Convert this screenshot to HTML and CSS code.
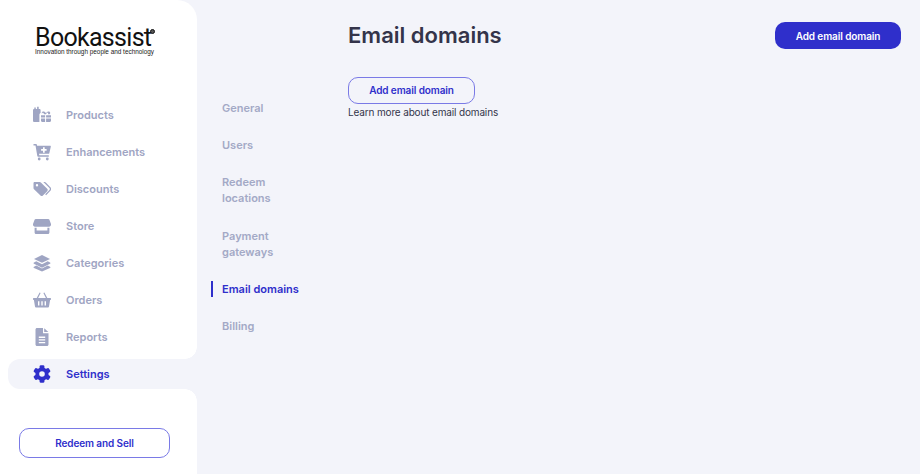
FILE: index.html
```html
<!DOCTYPE html>
<html lang="en">
<head>
    <meta charset="UTF-8">
    <meta name="viewport" content="width=device-width, initial-scale=1.0">
    <title>Email domains</title>
    <link rel="stylesheet" href="styles.css">
</head>
<body>

<div class="app">
    <!-- Main sidebar -->
    <aside class="sidebar">
        <div class="logo">
            <div class="logo-name">Bookassist<span class="logo-mark"></span></div>
            <div class="logo-tag">Innovation through people and technology</div>
        </div>

        <nav class="side-nav">
            <a class="side-item">
                <svg class="side-icon" viewBox="0 0 18 18"><path d="M0 4.300C0 3.500.6 3 1.300 3V1.500h1.500V3h1.300V.8h1.600V3h.6c.8 0 1.300.5 1.300 1.300v2.600c-.8.300-1.200 1-1.200 1.800v7.300H1.300C.6 16 0 15.500 0 14.700z"/><path d="M8 9.200h4.100v2.400H8zM13.100 9.200H18v2.400h-4.900zM8 12.500h4.100V16H9.200C8.500 16 8 15.500 8 14.800zM13.100 12.500H18v2.300c0 .7-.5 1.200-1.200 1.200h-3.700z"/><path d="M9.300 8.300c-.9-.8-.7-2.400.5-2.800 1.100-.4 2.300.3 3.200 1.600.9-1.300 2.100-2 3.200-1.600 1.200.4 1.400 2 .5 2.800h-1.900c.5-.4.500-1.300-.1-1.500-.6-.2-1.300.4-1.700 1.500h-1.800c-.4-1.100-1.100-1.700-1.700-1.500-.6.200-.6 1.100-.1 1.500z"/></svg>
                <span>Products</span>
            </a>
            <a class="side-item">
                <svg class="side-icon" viewBox="0 0 18 18"><path fill-rule="evenodd" d="M.5 1h2.600c.4 0 .7.3.8.7l.2 1h13c.5 0 .9.500.7 1l-1.500 6.500c-.1.400-.4.600-.8.600H6l.3 1.400h9.500v1.500H5.100c-.4 0-.7-.3-.8-.6L2.500 2.500h-2zM10 4.200v1.900H8.100v1.700H10v1.900h1.700V7.800h1.900V6.100h-1.900V4.200z"/><circle cx="6.200" cy="16" r="1.400"/><circle cx="14.300" cy="16" r="1.400"/></svg>
                <span>Enhancements</span>
            </a>
            <a class="side-item">
                <svg class="side-icon" viewBox="0 0 18 18"><path fill-rule="evenodd" d="M.5 3.200c0-.7.5-1.200 1.200-1.200h5c.5 0 .9.200 1.200.5l6.300 6.300c.7.700.7 1.700 0 2.400l-4.300 4.300c-.7.700-1.700.7-2.400 0L1 9.200C.7 8.900.5 8.500.5 8zM4 4a1.200 1.200 0 1 0 0 2.400A1.200 1.200 0 0 0 4 4z"/><path d="M10.300 2h1.300c.5 0 .9.200 1.200.5l4.800 4.900c1 1 1 2.200 0 3.200l-4.500 4.600-.9-.9 4.200-4.300c.6-.6.600-1.300 0-1.900z"/></svg>
                <span>Discounts</span>
            </a>
            <a class="side-item">
                <svg class="side-icon" viewBox="0 0 18 18"><path d="M2.800 2h12.400c.6 0 1 .3 1.200.8L18 7v.8c0 1.100-.9 1.900-1.900 1.900H1.900C.9 9.700 0 8.900 0 7.800V7l1.600-4.200C1.800 2.300 2.200 2 2.800 2z"/><path fill-rule="evenodd" d="M1.600 10.700h2v2.800h10.800v-2.800h2v4.800c0 .8-.6 1.500-1.400 1.500H3c-.8 0-1.400-.7-1.400-1.500z"/></svg>
                <span>Store</span>
            </a>
            <a class="side-item">
                <svg class="side-icon" viewBox="0 0 18 18"><path d="M9 1l8 3.900L9 8.800 1 4.900z"/><path d="M3.300 7.300L1 8.500c-.6.400-.6.900 0 1.200l8 4 8-4c.6-.3.600-.8 0-1.200l-2.300-1.200L9 10.200z"/><path d="M3.300 11.600L1 12.800c-.6.300-.6.900 0 1.200l8 3.500 8-3.500c.6-.3.600-.9 0-1.200l-2.300-1.200L9 14.600z"/></svg>
                <span>Categories</span>
            </a>
            <a class="side-item">
                <svg class="side-icon" viewBox="0 0 18 18"><path fill-rule="evenodd" d="M.6 6.900h3.100L6.600 1.500l1 .5-2.500 4.900h7.800L10.400 2l1-.5 2.900 5.400h3.100c.4 0 .6.300.6.600v.8c0 .3-.2.600-.6.600h-.3l-1.100 6.700c-.1.600-.6 1-1.200 1H3.200c-.6 0-1.100-.4-1.200-1L.9 8.900H.6C.2 8.900 0 8.600 0 8.300v-.8c0-.3.200-.6.600-.6zM5 10.200v4.300h1.400v-4.300zm3.300 0v4.300h1.400v-4.300zm3.300 0v4.300H13v-4.300z"/></svg>
                <span>Orders</span>
            </a>
            <a class="side-item">
                <svg class="side-icon" viewBox="0 0 18 18"><path fill-rule="evenodd" d="M4 0h6v5.200h5.500v11.300c0 .8-.7 1.500-1.500 1.500H4c-.8 0-1.500-.7-1.500-1.500v-15C2.500.7 3.200 0 4 0zm1.800 8.500v1.400h6.400V8.500zm0 2.700v1.400h6.400v-1.400zm0 2.700v1.400h6.400v-1.400z"/><path d="M11.200.2l4.200 3.900h-4.200z"/></svg>
                <span>Reports</span>
            </a>
            <a class="side-item active">
                <svg class="side-icon" viewBox="-9 -9 18 18">
                    <circle class="gear-ring" r="4.700"/>
                    <rect class="gear-tooth" x="-2.400" y="-8.800" width="4.800" height="4.500" rx="1.300"/>
                    <rect class="gear-tooth" x="-2.400" y="-8.800" width="4.800" height="4.500" rx="1.300" transform="rotate(60)"/>
                    <rect class="gear-tooth" x="-2.400" y="-8.800" width="4.800" height="4.500" rx="1.300" transform="rotate(120)"/>
                    <rect class="gear-tooth" x="-2.400" y="-8.800" width="4.800" height="4.500" rx="1.300" transform="rotate(180)"/>
                    <rect class="gear-tooth" x="-2.400" y="-8.800" width="4.800" height="4.500" rx="1.300" transform="rotate(240)"/>
                    <rect class="gear-tooth" x="-2.400" y="-8.800" width="4.800" height="4.500" rx="1.300" transform="rotate(300)"/>
                </svg>
                <span>Settings</span>
            </a>
        </nav>

        <button class="btn btn-outline redeem-btn">Redeem and Sell</button>
    </aside>

    <!-- Settings sub navigation -->
    <nav class="sub-nav">
        <a class="sub-item">General</a>
        <a class="sub-item">Users</a>
        <a class="sub-item">Redeem locations</a>
        <a class="sub-item">Payment gateways</a>
        <a class="sub-item active">Email domains</a>
        <a class="sub-item">Billing</a>
    </nav>

    <main class="content">
        <div class="content-head">
            <h1>Email domains</h1>
            <button class="btn btn-solid">Add email domain</button>
        </div>
        <div class="empty">
            <button class="btn btn-outline empty-btn">Add email domain</button>
            <p>Learn more about email domains</p>
        </div>
    </main>
</div>

</body>
</html>
```

FILE: styles.css
```css
body {
    margin: 0;
    padding: 0;
    font-family: 'Inter', sans-serif;
    color: #34344a;
    background-color: #f3f4fa;
}

.app {
    display: flex;
    height: 474px;
    overflow: hidden;
}

/* Sidebar */
.sidebar {
    width: 197px;
    flex-shrink: 0;
    display: flex;
    flex-direction: column;
    background: #fff;
    border-top-right-radius: 20px;
}

.logo {
    height: 100px;
    padding: 28px 0 0 35px;
    box-sizing: border-box;
}

.logo-name {
    font-family: 'Roboto', sans-serif;
    font-size: 25px;
    line-height: 20px;
    letter-spacing: -0.7px;
    color: #111;
    position: relative;
    width: 120px;
}

.logo-mark {
    position: absolute;
    top: 1px;
    left: 115px;
    width: 3px;
    height: 3px;
    border: 1px solid #111;
    border-radius: 50%;
    background: #555;
}

.logo-tag {
    font-family: 'Liberation Sans', sans-serif;
    font-size: 6.4px;
    line-height: 7px;
    color: #222;
    white-space: nowrap;
}

.side-nav {
    display: flex;
    flex-direction: column;
    gap: 7px;
}

.side-item {
    position: relative;
    display: flex;
    align-items: center;
    gap: 15px;
    height: 30px;
    margin-left: 8px;
    padding-left: 25px;
    font-size: 11px;
    font-weight: 600;
    color: #9fa5c3;
}

.side-icon {
    width: 18px;
    height: 18px;
    fill: currentColor;
    flex-shrink: 0;
}

.gear-ring {
    fill: none;
    stroke: currentColor;
    stroke-width: 3.800;
}

.side-item.active {
    color: #2f2fcb;
    background: #f3f4fa;
    border-radius: 12px 0 0 12px;
}

/* inverted corners where the active row meets the white panel */
.side-item.active::before,
.side-item.active::after {
    content: "";
    position: absolute;
    right: 0;
    width: 12px;
    height: 12px;
}

.side-item.active::before {
    top: -12px;
    background: radial-gradient(circle at 0 0, transparent 11.500px, #f3f4fa 12px);
}

.side-item.active::after {
    bottom: -12px;
    background: radial-gradient(circle at 0 100%, transparent 11.500px, #f3f4fa 12px);
}

/* Buttons */
.btn {
    font-family: 'Inter', sans-serif;
    font-size: 10px;
    font-weight: 600;
    letter-spacing: -0.1px;
    border-radius: 10px;
    box-sizing: border-box;
    cursor: pointer;
    padding: 0;
}

.btn-outline {
    background: transparent;
    color: #2f2fcb;
    border: 1px solid #7a7ae6;
}

.btn-solid {
    width: 126px;
    height: 27px;
    margin-top: 1px;
    background: #2f2fcb;
    color: #fff;
    border: none;
}

.redeem-btn {
    width: 151px;
    height: 30px;
    margin: auto 0 16px 19px;
}

.empty-btn {
    width: 127px;
    height: 27px;
    padding-bottom: 2px;
}

/* Settings sub navigation */
.sub-nav {
    width: 151px;
    flex-shrink: 0;
    box-sizing: border-box;
    display: flex;
    flex-direction: column;
    gap: 21.200px;
    padding: 100px 40px 0 25px;
}

.sub-item {
    position: relative;
    font-size: 11px;
    font-weight: 600;
    line-height: 16px;
    color: #a3a9c6;
}

.sub-item.active {
    color: #2f2fcb;
    white-space: nowrap;
}

.sub-item.active::before {
    content: "";
    position: absolute;
    left: -11px;
    top: 0;
    width: 2px;
    height: 16px;
    background: #2f2fcb;
}

/* Content */
.content {
    flex: 1;
    padding: 21px 19px 0 0;
}

.content-head {
    display: flex;
    justify-content: space-between;
    align-items: flex-start;
    height: 56px;
}

h1 {
    margin: 0;
    font-size: 22px;
    font-weight: 600;
    line-height: 29px;
}

.empty p {
    margin: 1px 0 0;
    font-size: 10px;
    letter-spacing: -0.15px;
    line-height: 14px;
}
```
